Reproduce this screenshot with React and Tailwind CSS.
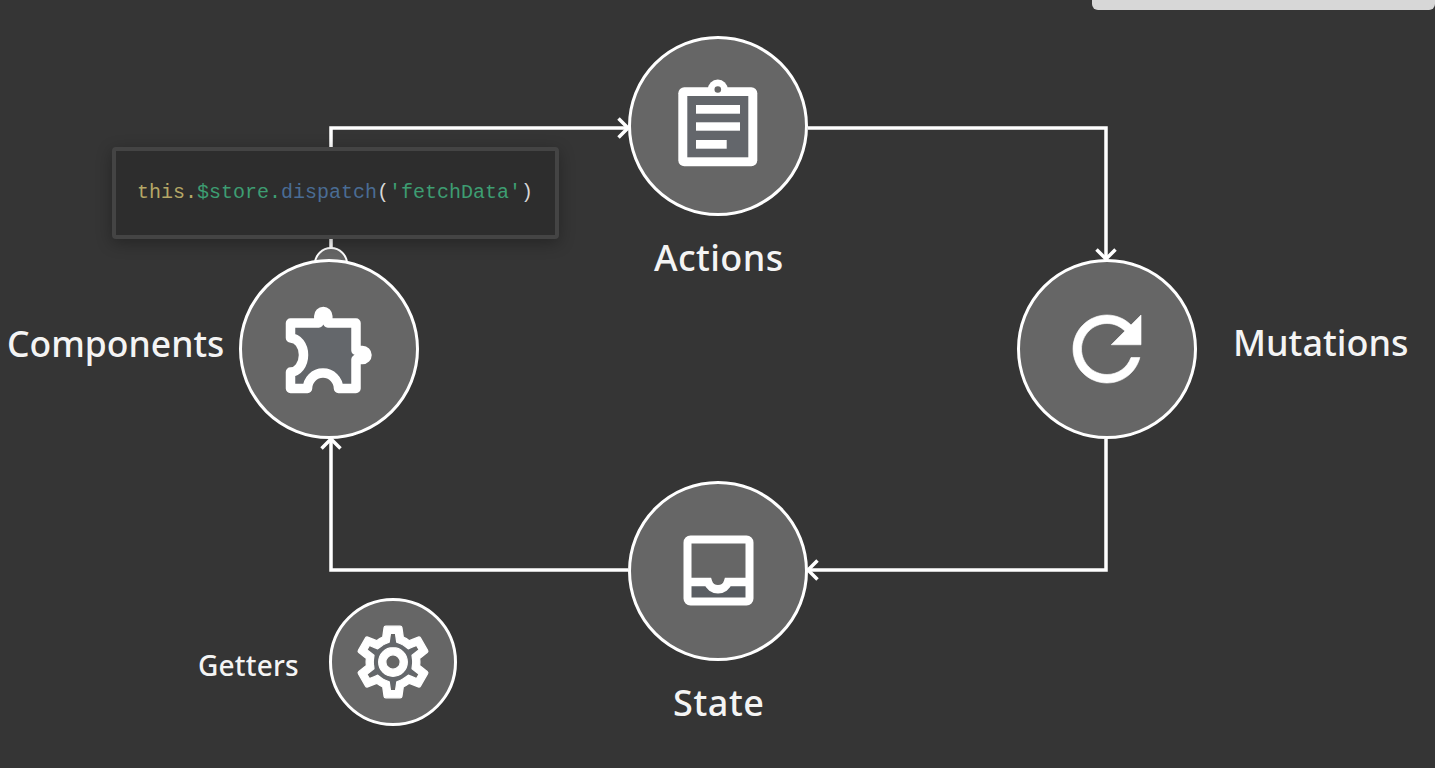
const labelFont = { fontFamily: '"Noto Sans", sans-serif' };

// Material style icons, each svg is drawn in page pixels relative to its circle
function ActionsIcon() {
  return (
    <svg width="100" height="100" viewBox="668 76 100 100">
      <circle cx="717.8" cy="89.5" r="10" fill="#fff" />
      <rect x="678.3" y="87.3" width="79" height="79" rx="6" fill="#fff" />
      <circle cx="717.8" cy="89.5" r="3.3" fill="#666" />
      <rect x="687.3" y="96" width="61" height="61.3" fill="#63666b" />
      <rect x="696" y="105" width="44" height="8.7" fill="#fff" />
      <rect x="696" y="122.3" width="44" height="8.4" fill="#fff" />
      <rect x="696" y="140" width="30.7" height="8.7" fill="#fff" />
    </svg>
  );
}

function ComponentsIcon() {
  return (
    <svg width="100" height="100" viewBox="279 299 100 100">
      <path
        d="M290.5 323H318.8V316a4.5 4.5 0 0 1 9 0V323H356V350.5H362.5a4.5 4.5 0 0 1 0 9H356V388.5H338.5A15.5 15.5 0 0 0 307.5 388.5H290.5V372A13 17 0 0 0 290.5 338Z"
        fill="#64676b"
        stroke="#fff"
        strokeWidth="9.5"
        strokeLinejoin="round"
      />
    </svg>
  );
}

function MutationsIcon() {
  return (
    <svg width="102" height="102" viewBox="0 0 24 24" fill="#fff" stroke="#fff" strokeWidth="0.15">
      <path d="M17.65 6.35C16.2 4.9 14.21 4 12 4c-4.42 0-7.99 3.58-7.99 8s3.57 8 7.99 8c3.73 0 6.84-2.55 7.73-6h-2.08c-.82 2.33-3.04 4-5.65 4-3.31 0-6-2.69-6-6s2.69-6 6-6c1.66 0 3.14.69 4.22 1.78L13 11h7V4l-2.35 2.35z" />
    </svg>
  );
}

function StateIcon() {
  return (
    <svg width="90" height="90" viewBox="673 527 90 90">
      <path d="M687 583H708a10.5 10.5 0 0 0 20 0H750V602H687Z" fill="#5a5e63" />
      <rect x="687.5" y="540.5" width="62" height="62" rx="3" fill="none" stroke="#fff" strokeWidth="8" />
      <path d="M687 583H708a10.5 10.5 0 0 0 20 0H750" fill="none" stroke="#fff" strokeWidth="8.5" />
    </svg>
  );
}

function GettersIcon() {
  return (
    <svg width="86" height="86" viewBox="0 0 24 24" fill="#fff" stroke="#fff" strokeWidth="0.35" strokeLinejoin="round">
      <circle cx="12" cy="12" r="7" fill="#64676b" stroke="none" />
      <circle cx="12" cy="12" r="2" fill="#666" stroke="none" />
      <path d="M19.43 12.98c.04-.32.07-.64.07-.98 0-.34-.03-.66-.07-.98l2.11-1.65c.19-.15.24-.42.12-.64l-2-3.46c-.09-.16-.26-.25-.44-.25-.06 0-.12.01-.17.03l-2.49 1c-.52-.4-1.08-.73-1.69-.98l-.38-2.65C14.46 2.18 14.25 2 14 2h-4c-.25 0-.46.18-.49.42l-.38 2.65c-.61.25-1.17.59-1.69.98l-2.49-1c-.06-.02-.12-.03-.18-.03-.17 0-.34.09-.43.25l-2 3.46c-.13.22-.07.49.12.64l2.11 1.65c-.04.32-.07.65-.07.98 0 .33.03.66.07.98l-2.11 1.65c-.19.15-.24.42-.12.64l2 3.46c.09.16.26.25.44.25.06 0 .12-.01.17-.03l2.49-1c.52.4 1.08.73 1.69.98l.38 2.65c.03.24.24.42.49.42h4c.25 0 .46-.18.49-.42l.38-2.65c.61-.25 1.17-.59 1.69-.98l2.49 1c.06.02.12.03.18.03.17 0 .34-.09.43-.25l2-3.46c.12-.22.07-.49-.12-.64l-2.11-1.65zm-1.98-1.71c.04.31.05.52.05.73 0 .21-.02.43-.05.73l-.14 1.13.89.7 1.08.84-.7 1.21-1.27-.51-1.04-.42-.9.68c-.43.32-.84.56-1.25.73l-1.06.43-.16 1.13-.2 1.35h-1.4l-.19-1.35-.16-1.13-1.06-.43c-.43-.18-.83-.41-1.23-.71l-.91-.7-1.06.43-1.27.51-.7-1.21 1.08-.84.89-.7-.14-1.13c-.03-.31-.05-.54-.05-.74s.02-.43.05-.73l.14-1.13-.89-.7-1.08-.84.7-1.21 1.27.51 1.04.42.9-.68c.43-.32.84-.56 1.25-.73l1.06-.43.16-1.13.2-1.35h1.39l.19 1.35.16 1.13 1.06.43c.43.18.83.41 1.23.71l.91.7 1.06-.43 1.27-.51.7 1.21-1.07.85-.89.7.14 1.13zM12 8c-2.21 0-4 1.79-4 4s1.79 4 4 4 4-1.79 4-4-1.79-4-4-4zm0 6c-1.1 0-2-.9-2-2s.9-2 2-2 2 .9 2 2-.9 2-2 2z" />
    </svg>
  );
}

export default function App() {
  return (
    <div className="relative w-[1435px] h-[768px] overflow-hidden bg-[#353535]" style={labelFont}>
      {/* panel peeking in from the top */}
      <div className="absolute left-[1092px] top-0 w-[343px] h-[10px] bg-[#d7d7d7] rounded-b-md" />

      {/* connector lines and arrow heads */}
      <svg className="absolute inset-0" width="1435" height="768" fill="none" stroke="#fff" strokeWidth="3.5">
        <path d="M331 262V128H628" />
        <path d="M618.5 118.5L628 128L618.5 137.5" />
        <path d="M808 128H1106V259" />
        <path d="M1096.5 249.5L1106 259L1115.5 249.5" />
        <path d="M1106 439V570H808" />
        <path d="M817.5 560.5L808 570L817.5 579.5" />
        <path d="M628 570H331V439" />
        <path d="M321.5 448.5L331 439L340.5 448.5" />
        <circle cx="331" cy="264" r="16" fill="#666" strokeWidth="2" />
      </svg>

      {/* nodes */}
      <div className="absolute left-[628px] top-[36px] w-[180px] h-[180px] rounded-full border-[3px] border-white bg-[#666666] flex items-center justify-center">
        <ActionsIcon />
      </div>
      <div className="absolute left-[239px] top-[259px] w-[180px] h-[180px] rounded-full border-[3px] border-white bg-[#666666] flex items-center justify-center">
        <ComponentsIcon />
      </div>
      <div className="absolute left-[1017px] top-[259px] w-[180px] h-[180px] rounded-full border-[3px] border-white bg-[#666666] flex items-center justify-center">
        <MutationsIcon />
      </div>
      <div className="absolute left-[628px] top-[481px] w-[180px] h-[180px] rounded-full border-[3px] border-white bg-[#666666] flex items-center justify-center">
        <StateIcon />
      </div>
      <div className="absolute left-[329px] top-[598px] w-[128px] h-[128px] rounded-full border-[3px] border-white bg-[#666666] flex items-center justify-center">
        <GettersIcon />
      </div>

      {/* labels */}
      <div className="absolute left-[654px] top-[233px] text-[36px] tracking-[0.4px] leading-[50px] font-medium text-[#f4f4f4] whitespace-nowrap">Actions</div>
      <div className="absolute left-[7px] top-[318px] text-[35.5px] leading-[50px] font-medium text-[#f4f4f4] whitespace-nowrap">Components</div>
      <div className="absolute left-[1233px] top-[318px] text-[36px] leading-[50px] font-medium text-[#f4f4f4] whitespace-nowrap">Mutations</div>
      <div className="absolute left-[673px] top-[678px] text-[36px] tracking-[0.6px] leading-[50px] font-medium text-[#f4f4f4] whitespace-nowrap">State</div>
      <div className="absolute left-[198px] top-[645px] text-[28px] tracking-[0.2px] leading-[40px] font-medium text-[#f4f4f4] whitespace-nowrap">Getters</div>

      {/* code tooltip */}
      <div className="absolute left-[112px] top-[147px] w-[447px] h-[92px] border-4 border-[#444444] rounded-sm bg-[#2d2d2d] shadow-[0_4px_16px_rgba(0,0,0,0.3)] flex items-center pl-[21px] font-['Liberation_Mono',monospace] text-[20px] whitespace-nowrap">
        <span className="text-[#b5a766]">this.</span>
        <span className="text-[#3d9d72]">$store.</span>
        <span className="text-[#4a6c94]">dispatch</span>
        <span className="text-[#d8d8d8]">(</span>
        <span className="text-[#3d9d72]">'fetchData'</span>
        <span className="text-[#d8d8d8]">)</span>
      </div>
    </div>
  );
}
